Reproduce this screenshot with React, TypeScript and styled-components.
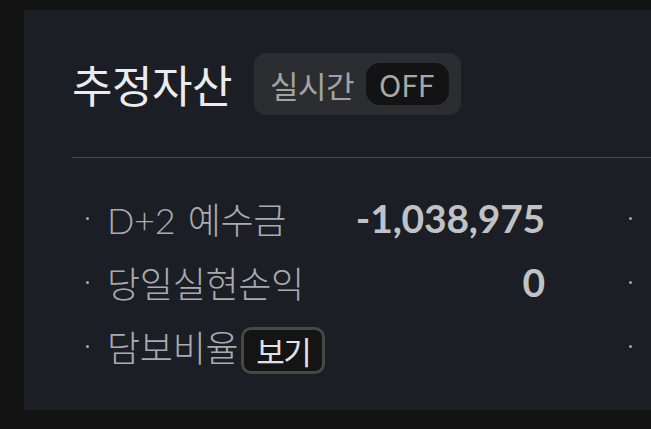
import React from "react";
import styled, { createGlobalStyle } from "styled-components";

const GlobalStyle = createGlobalStyle`
    html, body {
        margin: 0;
        padding: 0;
        background: #131313;
        overflow: hidden;
    }
    body {
        font-family: "Noto Sans CJK KR", "Noto Sans", sans-serif;
    }
`;

const Page = styled.div`
    width: 651px;
    height: 429px;
    padding: 10px 0 0 24px;
    box-sizing: border-box;
    overflow: hidden;
`;

const Panel = styled.section`
    width: 820px;
    height: 400px;
    background: #1b1e25;
    padding: 0 0 0 48px;
    box-sizing: border-box;
`;

const Header = styled.div`
    display: flex;
    align-items: flex-start;
    gap: 22px;
    height: 148px;
    padding-top: 43px;
    box-sizing: border-box;
    border-bottom: 1px solid #474b51;
`;

const Title = styled.h1`
    margin: 0;
    font-size: 44px;
    font-weight: 400;
    color: #ececec;
    letter-spacing: -0.5px;
    line-height: 62px;
`;

const LiveBadge = styled.div`
    display: flex;
    align-items: center;
    gap: 12px;
    height: 62px;
    padding: 0 12px 0 16px;
    box-sizing: border-box;
    background: #2c2d30;
    border-radius: 12px;
    font-size: 31px;
    color: #a3a3a3;
    letter-spacing: -0.5px;
`;

const OffPill = styled.span`
    display: inline-flex;
    align-items: center;
    height: 42px;
    padding: 0 15px 0 13px;
    background: #131313;
    border-radius: 14px;
    font-size: 30px;
    color: #a8a8a8;
    letter-spacing: 0;
`;

const Rows = styled.div`
    display: grid;
    grid-template-columns: 473px 473px;
    column-gap: 70px;
    padding-top: 28px;
`;

const Row = styled.div`
    display: flex;
    align-items: center;
    height: 64px;
`;

const Bullet = styled.span`
    width: 3px;
    height: 3px;
    border-radius: 50%;
    background: #a6a8ac;
    margin: 0 18px 0 14px;
    flex: none;
`;

const Label = styled.span`
    font-family: Lato, "Noto Sans CJK KR", sans-serif;
    font-size: 36px;
    font-weight: 300;
    color: #a9abaf;
    letter-spacing: -0.3px;
    word-spacing: 3px;
`;

const Value = styled.span`
    margin-left: auto;
    font-family: Lato, "Noto Sans", sans-serif;
    font-weight: 700;
    font-size: 39px;
    color: #c1c2c4;
    letter-spacing: -0.2px;
`;

const ViewButton = styled.button`
    margin: 8px 0 0 3px;
    height: 47px;
    padding: 0 12px;
    background: #141414;
    border: 3px solid #474747;
    border-radius: 10px;
    font-family: inherit;
    font-size: 31px;
    font-weight: 400;
    color: #e2e2e2;
    letter-spacing: -1.5px;
    line-height: 1;
`;

type Item = { label: string; value?: string; action?: string };

const leftItems: Item[] = [
    { label: "D+2 예수금", value: "-1,038,975" },
    { label: "당일실현손익", value: "0" },
    { label: "담보비율", action: "보기" },
];

const rightItems: Item[] = [
    { label: "" },
    { label: "" },
    { label: "" },
];

const Column: React.FC<{ items: Item[] }> = ({ items }) => (
    <div>
        {items.map((item, i) => (
            <Row key={i}>
                <Bullet />
                <Label>{item.label}</Label>
                {item.action && <ViewButton>{item.action}</ViewButton>}
                {item.value !== undefined && <Value>{item.value}</Value>}
            </Row>
        ))}
    </div>
);

export default function App() {
    return (
        <Page>
            <GlobalStyle />
            <Panel>
                <Header>
                    <Title>추정자산</Title>
                    <LiveBadge>
                        실시간
                        <OffPill>OFF</OffPill>
                    </LiveBadge>
                </Header>
                <Rows>
                    <Column items={leftItems} />
                    <Column items={rightItems} />
                </Rows>
            </Panel>
        </Page>
    );
}
